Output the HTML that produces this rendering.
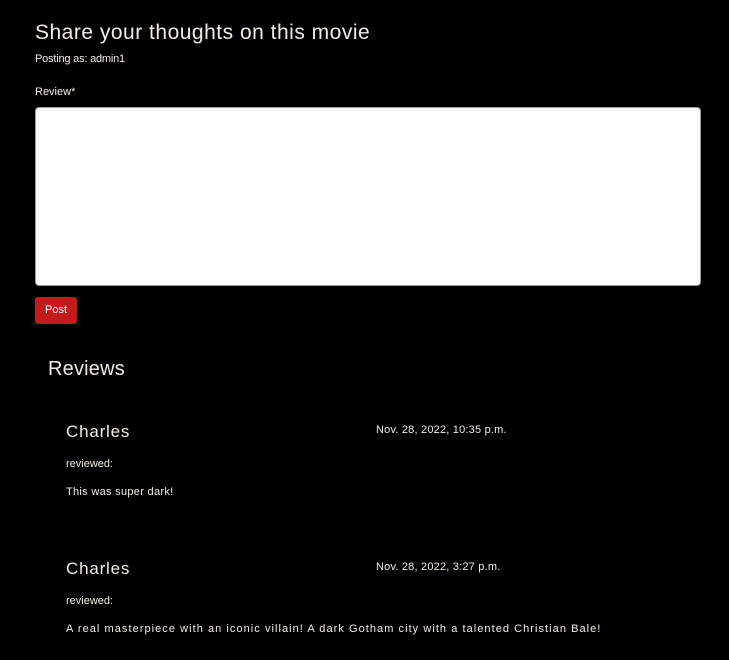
<!DOCTYPE html>
<html><head><style>
body{margin:0;background:#000;width:729px;height:660px;overflow:hidden;font-family:"Liberation Sans",sans-serif;color:#f2ede2;position:relative}
.a{position:absolute;white-space:nowrap;line-height:1}
</style></head><body>
<div class="a" style="left:35px;top:22px;font-size:21px;letter-spacing:0.5px">Share your thoughts on this movie</div>
<div class="a" style="left:35px;top:54px;font-size:11px;letter-spacing:-0.2px">Posting as: admin1</div>
<div class="a" style="left:35px;top:87px;font-size:11px">Review*</div>
<div class="a" style="left:35px;top:107px;width:664px;height:177px;background:#fff;border:1px solid #999;border-radius:4px"></div>
<div class="a" style="left:35px;top:297px;width:42px;height:27px;background:#c11b1b;border-radius:3px;font-size:11px;line-height:27px;text-align:center;color:#fff">Post</div>
<div class="a" style="left:48px;top:359px;font-size:20px;letter-spacing:0.2px">Reviews</div>

<div class="a" style="left:66px;top:423px;font-size:17px;letter-spacing:0.8px">Charles</div>
<div class="a" style="left:376px;top:425px;font-size:11px;letter-spacing:0.2px">Nov. 28, 2022, 10:35 p.m.</div>
<div class="a" style="left:66px;top:459px;font-size:11px">reviewed:</div>
<div class="a" style="left:66px;top:487px;font-size:11px;letter-spacing:0.3px">This was super dark!</div>

<div class="a" style="left:66px;top:560px;font-size:17px;letter-spacing:0.8px">Charles</div>
<div class="a" style="left:376px;top:562px;font-size:11px;letter-spacing:0.2px">Nov. 28, 2022, 3:27 p.m.</div>
<div class="a" style="left:66px;top:596px;font-size:11px">reviewed:</div>
<div class="a" style="left:66px;top:624px;font-size:11px;letter-spacing:1.05px">A real masterpiece with an iconic villain! A dark Gotham city with a talented Christian Bale!</div>
</body></html>
